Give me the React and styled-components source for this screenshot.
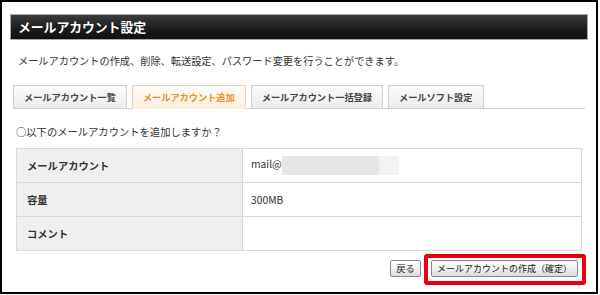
import React from 'react'
import styled, { createGlobalStyle } from 'styled-components'

const GlobalStyle = createGlobalStyle`
  html, body {
    margin: 0;
    padding: 0;
    background: #fff;
  }
  body {
    font-family: "Noto Sans CJK JP", "Noto Sans", sans-serif;
    color: #333;
  }
`

const Frame = styled.div`
  box-sizing: border-box;
  width: 598px;
  height: 294px;
  border: 2px solid #000;
  padding: 12px 8px 0 8px;
  background: #fff;
`

const TitleBar = styled.div`
  box-sizing: border-box;
  height: 26px;
  border: 1px solid #a8a8a8;
  background: linear-gradient(#3c3c3c, #1a1a1a 60%, #111);
  color: #fff;
  font-size: 12.8px;
  font-weight: 700;
  line-height: 24px;
  padding-left: 7px;
`

const Lead = styled.p`
  margin: 13px 0 0 8px;
  font-size: 10.2px;
  line-height: 16px;
  color: #333;
`

const TabRow = styled.div`
  display: flex;
  align-items: flex-end;
  gap: 5px;
  margin: 16px 3px 0 3px;
  border-bottom: 1px solid #d0d0d0;
`

const Tab = styled.div`
  box-sizing: border-box;
  height: 24px;
  padding: 0 10px;
  margin-bottom: -1px;
  border: 1px solid ${p => (p.$active ? '#e2d6c8' : '#cfcfcf')};
  border-bottom: 1px solid ${p => (p.$active ? '#fdf1e2' : '#d0d0d0')};
  background: ${p =>
    p.$active
      ? 'linear-gradient(#fffaf4, #fdeedd)'
      : 'linear-gradient(#fbfbfb, #ececec)'};
  color: ${p => (p.$active ? '#e98e2c' : '#444')};
  font-size: 9.2px;
  font-weight: 700;
  line-height: 22px;
  white-space: nowrap;
`

const Question = styled.p`
  margin: 15px 0 0 6px;
  font-size: 10.3px;
  line-height: 16px;
`

const Table = styled.table`
  margin: 8px 0 0 6px;
  width: 566px;
  border-collapse: collapse;
  border: 1px solid #dadada;
  font-size: 10.3px;
`

const Label = styled.th`
  box-sizing: border-box;
  width: 226px;
  height: 33px;
  padding: 0 0 0 10px;
  background: #efefef;
  border: 1px solid #d8d8d8;
  text-align: left;
  font-weight: 700;
  color: #333;
`

const Value = styled.td`
  height: 33px;
  padding: 0 0 0 8px;
  border: 1px solid #dadada;
  color: #333;
`

const Blur = styled.span`
  display: inline-block;
  vertical-align: middle;
  width: ${p => p.$w}px;
  height: 19px;
  background: ${p => p.$c};
`

const Actions = styled.div`
  display: flex;
  justify-content: flex-end;
  align-items: flex-start;
  gap: 3px;
  margin: 3px 2px 0 0;
`

const Button = styled.button`
  box-sizing: border-box;
  height: 17px;
  margin-top: 6px;
  padding: 0 5px;
  border: 1px solid #8a8a8a;
  border-radius: 2px;
  background: linear-gradient(#ffffff, #f0f0f0 50%, #dcdcdc);
  font-family: "Noto Sans CJK JP", sans-serif;
  font-size: ${p => (p.$wide ? 9 : 9.4)}px;
  line-height: 15px;
  color: #222;
`

const Highlight = styled.div`
  display: flex;
  padding: 2px 4px 4px 3px;
  border: 4px solid #e60012;
  border-radius: 3px;

  ${Button} {
    margin-top: 0;
  }
`

const rows = [
  { label: 'メールアカウント', mail: true },
  { label: '容量', value: '300MB' },
  { label: 'コメント', value: '' },
]

const tabs = ['メールアカウント一覧', 'メールアカウント追加', 'メールアカウント一括登録', 'メールソフト設定']

const App = () => {
  return (
    <>
      <GlobalStyle />
      <Frame>
        <TitleBar>メールアカウント設定</TitleBar>
        <Lead>メールアカウントの作成、削除、転送設定、パスワード変更を行うことができます。</Lead>
        <TabRow>
          {tabs.map((t, i) => (
            <Tab key={t} $active={i === 1}>{t}</Tab>
          ))}
        </TabRow>
        <Question>○以下のメールアカウントを追加しますか？</Question>
        <Table>
          <tbody>
            {rows.map(r => (
              <tr key={r.label}>
                <Label>{r.label}</Label>
                <Value>
                  {r.mail ? (
                    <>
                      mail@
                      <Blur $w={97} $c="#e6e6e6" />
                      <Blur $w={20} $c="#f3f3f3" />
                    </>
                  ) : (
                    r.value
                  )}
                </Value>
              </tr>
            ))}
          </tbody>
        </Table>
        <Actions>
          <Button>戻る</Button>
          <Highlight>
            <Button $wide>メールアカウントの作成（確定）</Button>
          </Highlight>
        </Actions>
      </Frame>
    </>
  )
}

export default App
